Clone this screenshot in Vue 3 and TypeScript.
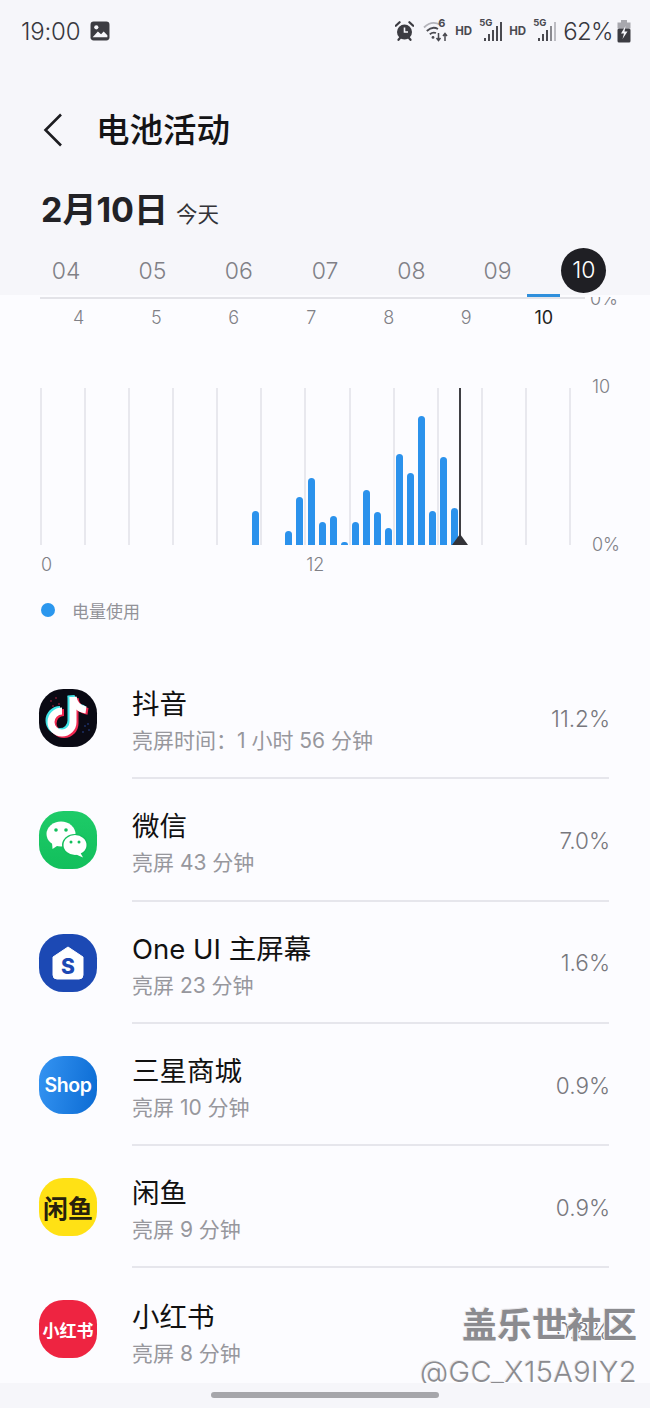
<script setup lang="ts">
interface AppRow {
  key: string
  name: string
  sub: string
  pct: string
}

const days = ['04', '05', '06', '07', '08', '09', '10']
const ticks = [4, 5, 6, 7, 8, 9, 10]
const gridLines = Array.from({ length: 13 }, (_, i) => i)

// bar heights in px, keyed by 15 minute-ish slot (48 slots across the chart)
const barHeights: Record<number, number> = {
  19: 34, 22: 14, 23: 48, 24: 67, 25: 23, 26: 29, 27: 3, 28: 23, 29: 55,
  30: 33, 31: 17, 32: 91, 33: 72, 34: 129, 35: 34, 36: 88, 37: 37,
}
const slots = Array.from({ length: 48 }, (_, i) => barHeights[i] ?? 0)

const apps: AppRow[] = [
  { key: 'douyin', name: '抖音', sub: '亮屏时间：1 小时 56 分钟', pct: '11.2%' },
  { key: 'wechat', name: '微信', sub: '亮屏 43 分钟', pct: '7.0%' },
  { key: 'oneui', name: 'One UI 主屏幕', sub: '亮屏 23 分钟', pct: '1.6%' },
  { key: 'shop', name: '三星商城', sub: '亮屏 10 分钟', pct: '0.9%' },
  { key: 'xianyu', name: '闲鱼', sub: '亮屏 9 分钟', pct: '0.9%' },
  { key: 'xhs', name: '小红书', sub: '亮屏 8 分钟', pct: '0.8%' },
]
</script>

<template>
  <div class="page">
    <header class="head">
      <div class="status">
        <span class="time">19:00</span>
        <svg class="pic" width="20" height="20" viewBox="0 0 19 19">
          <rect x="0.5" y="0.5" width="18" height="18" rx="3" fill="#3c3c42" />
          <circle cx="6" cy="6" r="2" fill="#f6f6fa" />
          <path d="M2.5 15.5 L7.5 10 L10.5 12.5 L13 10 L16.5 13.5 V15.5 Z" fill="#f6f6fa" />
        </svg>
        <div class="status-right">
          <svg class="alarm" width="19" height="20" viewBox="0 0 19 20">
            <circle cx="9.5" cy="11" r="7.5" fill="#3c3c42" />
            <path d="M9.5 6.5 V11 H13" fill="none" stroke="#f6f6fa" stroke-width="1.6" />
            <path d="M0.8 4.8 L4.6 1.2 M18.2 4.8 L14.4 1.2 M3.5 18.8 L5 17 M15.5 18.8 L14 17" stroke="#3c3c42" stroke-width="2.2" stroke-linecap="round" />
          </svg>
          <div class="wifi">
            <svg width="27" height="24" viewBox="0 0 27 24">
              <path d="M1 8.5 C6 3.5 12 3 17 5.5" fill="none" stroke="#b4b4ba" stroke-width="1.8" />
              <path d="M3.8 12 C7.5 8.5 11.5 8 15 10" fill="none" stroke="#4a4a50" stroke-width="1.8" />
              <path d="M6.8 15.2 C9 13.4 11 13.2 13 14" fill="none" stroke="#4a4a50" stroke-width="1.8" />
              <circle cx="10" cy="18.4" r="1.4" fill="#4a4a50" />
              <path d="M15.5 14 V21 M13.5 19 L15.5 21.5 L17.5 19 M22 22 V15 M20 17 L22 14.5 L24 17" fill="none" stroke="#4a4a50" stroke-width="1.5" />
            </svg>
            <span class="wifi-six">6</span>
          </div>
          <span class="hd">HD</span>
          <div class="net">
            <span class="five-g">5G</span>
            <svg width="23" height="22" viewBox="0 0 23 22">
              <rect x="5" y="18" width="2" height="3" fill="#4a4a50" />
              <rect x="9" y="14" width="2" height="7" fill="#4a4a50" />
              <rect x="13" y="10" width="2" height="11" fill="#4a4a50" />
              <rect x="17" y="6" width="2" height="15" fill="#4a4a50" />
              <rect x="21" y="2" width="2" height="19" fill="#4a4a50" />
            </svg>
          </div>
          <span class="hd">HD</span>
          <div class="net">
            <span class="five-g">5G</span>
            <svg width="23" height="22" viewBox="0 0 23 22">
              <rect x="5" y="18" width="2" height="3" fill="#4a4a50" />
              <rect x="9" y="14" width="2" height="7" fill="#4a4a50" />
              <rect x="13" y="10" width="2" height="11" fill="#4a4a50" />
              <rect x="17" y="6" width="2" height="15" fill="#8a8a90" />
              <rect x="21" y="2" width="2" height="19" fill="#bcbcc2" />
            </svg>
          </div>
          <span class="batt-num">62%</span>
          <svg class="batt" width="14" height="23" viewBox="0 0 14 23">
            <rect x="4" y="0" width="6" height="3" fill="#a8a8ae" />
            <rect x="0.5" y="2.5" width="13" height="6" fill="#a8a8ae" />
            <rect x="0.5" y="8.5" width="13" height="14" rx="1.5" fill="#3c3c42" />
            <path d="M8.5 6 L4 13.5 H7 L5.5 19 L10.5 11.5 H7.5 Z" fill="#f6f6fa" />
          </svg>
        </div>
      </div>

      <div class="title-row">
        <svg class="back" width="20" height="34" viewBox="0 0 20 34">
          <path d="M18 1.5 L2.5 17 L18 32.5" fill="none" stroke="#1c1c20" stroke-width="2.6" />
        </svg>
        <h1 class="title">电池活动</h1>
      </div>

      <div class="date-row">
        <span class="date">2月10日</span>
        <span class="today">今天</span>
      </div>

      <div class="week">
        <div v-for="d in days" :key="d" class="day" :class="{ on: d === '10' }">
          <span>{{ d }}</span>
        </div>
      </div>
    </header>

    <section class="panel">
      <span class="clipped-pct">0%</span>
      <div class="axis"><i class="axis-on"></i></div>
      <div class="ticks">
        <span v-for="t in ticks" :key="t" class="tick" :class="{ on: t === 10 }">{{ t }}</span>
      </div>

      <div class="chart-wrap">
        <div class="chart">
          <div class="lines">
            <i v-for="n in gridLines" :key="n" class="line"></i>
          </div>
          <div class="bars">
            <div v-for="(h, i) in slots" :key="i" class="slot">
              <i v-if="h" class="bar" :style="{ height: h + 'px' }"></i>
            </div>
          </div>
          <div class="now"></div>
        </div>
        <div class="y-labels">
          <span>10</span>
          <span>0%</span>
        </div>
      </div>

      <div class="x-labels">
        <span class="x-0">0</span>
        <span class="x-12">12</span>
      </div>

      <div class="legend">
        <i class="dot"></i>
        <span>电量使用</span>
      </div>

      <ul class="list">
        <li v-for="a in apps" :key="a.key" class="row">
          <div class="icon" :class="a.key">
            <svg v-if="a.key === 'douyin'" width="58" height="58" viewBox="0 0 58 58">
              <g fill="#7a1830">
                <circle cx="12" cy="12" r="1" /><circle cx="17" cy="9" r="1" /><circle cx="14" cy="17" r="1" /><circle cx="20" cy="15" r="1" />
              </g>
              <g fill="#1c2f66">
                <circle cx="46" cy="37" r="1" /><circle cx="50" cy="41" r="1" /><circle cx="44" cy="43" r="1" /><circle cx="49" cy="35" r="1" />
              </g>
              <g fill="none" stroke-width="7">
                <g stroke="#3fe3e6" transform="translate(-2 -1.4)">
                  <path d="M34 8 V33 A11 11 0 1 1 23 22" />
                  <path d="M34 8 C35 15 40 20 47 21" />
                </g>
                <g stroke="#f02a52" transform="translate(2 1.4)">
                  <path d="M34 8 V33 A11 11 0 1 1 23 22" />
                  <path d="M34 8 C35 15 40 20 47 21" />
                </g>
                <g stroke="#fff">
                  <path d="M34 8 V33 A11 11 0 1 1 23 22" />
                  <path d="M34 8 C35 15 40 20 47 21" />
                </g>
              </g>
            </svg>

            <svg v-else-if="a.key === 'wechat'" width="58" height="58" viewBox="0 0 58 58">
              <ellipse cx="22" cy="23" rx="14.5" ry="12.5" fill="#fff" />
              <path d="M13 31 L13.5 38 L21 33 Z" fill="#fff" />
              <ellipse cx="36" cy="34" rx="13" ry="11" fill="#12bf5c" />
              <ellipse cx="36" cy="34" rx="11.5" ry="10" fill="#fff" />
              <path d="M41 41 L44 46.5 L36 43 Z" fill="#fff" />
              <circle cx="17" cy="19" r="1.8" fill="#12bf5c" />
              <circle cx="27" cy="19" r="1.8" fill="#12bf5c" />
              <circle cx="32" cy="31" r="1.5" fill="#12bf5c" />
              <circle cx="40" cy="31" r="1.5" fill="#12bf5c" />
            </svg>

            <template v-else-if="a.key === 'oneui'">
              <svg class="house" width="32" height="34" viewBox="0 0 32 34">
                <path d="M16 1 L31 11 V29 Q31 33 27 33 H5 Q1 33 1 29 V11 Z" fill="#fff" stroke="#fff" stroke-linejoin="round" />
              </svg>
              <span class="house-s">S</span>
            </template>

            <span v-else-if="a.key === 'shop'">Shop</span>
            <span v-else-if="a.key === 'xianyu'">闲鱼</span>
            <span v-else>小红书</span>
          </div>

          <div class="info">
            <div class="texts">
              <div class="name">{{ a.name }}</div>
              <div class="sub">{{ a.sub }}</div>
            </div>
            <div class="pct">{{ a.pct }}</div>
          </div>
        </li>
      </ul>
    </section>

    <div class="watermark">
      <div class="wm-top">盖乐世社区</div>
      <div class="wm-bot">@GC_X15A9IY2</div>
    </div>

    <footer class="nav"><i class="pill"></i></footer>
  </div>
</template>

<style scoped>
.page {
  position: relative;
  width: 650px;
  height: 1408px;
  overflow: hidden;
  background: #fcfcff;
  font-family: Inter, "Noto Sans CJK SC", sans-serif;
  color: #111;
}
.head {
  height: 295px;
  background: #f6f6fa;
  overflow: hidden;
}
.status {
  display: flex;
  align-items: center;
  height: 24px;
  padding: 19px 19px 0 21px;
}
.time {
  font-size: 24px;
  font-weight: 300;
  color: #38383e;
  letter-spacing: -0.2px;
}
.pic {
  margin-left: 10px;
}
.status-right {
  margin-left: auto;
  display: flex;
  align-items: center;
}
.alarm {
  margin-right: 9px;
}
.wifi {
  position: relative;
  width: 27px;
  height: 24px;
  margin-right: 5px;
}
.wifi-six {
  position: absolute;
  left: 15px;
  top: -3px;
  font-size: 11px;
  font-weight: 700;
  color: #4a4a50;
}
.hd {
  font-size: 11.5px;
  font-weight: 700;
  color: #4a4a50;
  width: 17px;
  margin-right: 7px;
}
.net {
  position: relative;
  width: 23px;
  height: 22px;
  margin-right: 7px;
}
.five-g {
  position: absolute;
  left: 0;
  top: -3px;
  font-size: 9.5px;
  font-weight: 700;
  color: #4a4a50;
}
.batt-num {
  font-size: 24px;
  font-weight: 300;
  letter-spacing: -0.6px;
  color: #38383e;
  margin-right: 4px;
}
.title-row {
  display: flex;
  align-items: center;
  height: 50px;
  margin-top: 62px;
  padding-left: 43px;
}
.title {
  margin: 0 0 0 33px;
  font-size: 33.5px;
  font-weight: 500;
  line-height: 50px;
  color: #141416;
}
.date-row {
  display: flex;
  align-items: baseline;
  height: 48px;
  margin-top: 31px;
  padding-left: 41px;
}
.date {
  font-size: 34px;
  font-weight: 700;
  color: #222226;
  line-height: 48px;
}
.today {
  margin-left: 8px;
  font-size: 21.5px;
  color: #333338;
}
.week {
  display: flex;
  margin-top: 13px;
  padding-left: 23px;
}
.day {
  width: 86.3px;
  height: 46px;
  display: flex;
  align-items: center;
  justify-content: center;
  font-size: 23px;
  font-weight: 300;
  color: #808086;
}
.day span {
  padding-top: 2px;
}
.day.on span {
  width: 45px;
  height: 45px;
  padding-top: 0;
  border-radius: 50%;
  background: #1f1f24;
  color: #fff;
  display: flex;
  align-items: center;
  justify-content: center;
}
.panel {
  position: relative;
}
/* the 0% of the chart scrolled under the sticky header, only its foot shows */
.clipped-pct {
  position: absolute;
  left: 590px;
  top: 0;
  height: 8px;
  line-height: 3px;
  overflow: hidden;
  font-size: 18px;
  font-weight: 300;
  color: #808086;
}
.axis {
  position: relative;
  width: 545px;
  height: 2px;
  margin: 2px 0 0 40px;
  background: #e3e3e8;
}
.axis-on {
  position: absolute;
  left: 487px;
  top: -3px;
  width: 33px;
  height: 3px;
  background: #2f8fdc;
}
.ticks {
  display: flex;
  padding: 7px 0 0 40px;
}
.tick {
  width: 77.5px;
  text-align: center;
  font-size: 18px;
  line-height: 24px;
  font-weight: 300;
  color: #808086;
}
.tick.on {
  color: #222;
  font-weight: 400;
}
.chart-wrap {
  display: flex;
  margin: 58px 0 0 40px;
}
.chart {
  position: relative;
  width: 531px;
  height: 157px;
}
.lines {
  display: flex;
  justify-content: space-between;
  height: 100%;
}
.line {
  width: 2px;
  background: #e8e8ee;
}
.bars {
  position: absolute;
  left: 0;
  right: 0;
  bottom: 0;
  height: 100%;
  display: flex;
  align-items: flex-end;
}
.slot {
  flex: 1;
  display: flex;
  justify-content: center;
  align-items: flex-end;
  height: 100%;
}
.bar {
  width: 7px;
  background: #2b92ec;
  border-radius: 3.5px 3.5px 0 0;
}
.now {
  position: absolute;
  left: 419px;
  top: 0;
  width: 2px;
  height: 157px;
  background: #3f3f44;
}
.now::after {
  content: "";
  position: absolute;
  left: -7px;
  bottom: 0;
  border-left: 8px solid transparent;
  border-right: 8px solid transparent;
  border-bottom: 11px solid #333338;
}
.y-labels {
  display: flex;
  flex-direction: column;
  justify-content: space-between;
  height: 182px;
  margin: -13px 0 0 21px;
  font-size: 18px;
  font-weight: 300;
  line-height: 24px;
  color: #808086;
}
.x-labels {
  display: flex;
  margin-top: -4px;
  padding-left: 41px;
  font-size: 18px;
  font-weight: 300;
  line-height: 24px;
  color: #808086;
}
.x-12 {
  margin-left: 254px;
}
.legend {
  display: flex;
  align-items: center;
  margin-top: 21px;
  padding-left: 41px;
  height: 24px;
  font-size: 17px;
  color: #929298;
}
.dot {
  width: 14px;
  height: 14px;
  border-radius: 50%;
  background: #2b97ee;
  margin-right: 17px;
}
.list {
  list-style: none;
  margin: 35px 0 0;
  padding: 0 41px 0 39px;
}
.row {
  display: flex;
  align-items: flex-start;
  height: 122.3px;
  box-sizing: border-box;
}
.icon {
  flex: none;
  width: 58px;
  height: 58px;
  margin-top: 32px;
  border-radius: 42%;
  position: relative;
  display: flex;
  align-items: center;
  justify-content: center;
  overflow: hidden;
  white-space: nowrap;
}
.icon.douyin {
  background: #0a0a14;
}
.icon.wechat {
  background: linear-gradient(#1ecb68, #12bf5c);
}
.icon.oneui {
  background: #1c49b4;
}
.house {
  position: absolute;
  left: 13px;
  top: 12px;
}
.house-s {
  position: relative;
  top: 4px;
  font-size: 21px;
  font-weight: 800;
  color: #1c49b4;
}
.icon.shop {
  background: linear-gradient(100deg, #3594f2, #0b6bd3);
  color: #fff;
  font-size: 19.5px;
  font-weight: 600;
  letter-spacing: -0.4px;
}
.icon.xianyu {
  background: #ffe115;
  color: #27210c;
  font-size: 25px;
  font-weight: 700;
}
.icon.xhs {
  background: #ee2441;
  color: #fff;
  font-size: 17px;
  font-weight: 700;
}
.info {
  flex: 1;
  height: 100%;
  box-sizing: border-box;
  margin-left: 35px;
  display: flex;
  align-items: center;
  justify-content: space-between;
  border-bottom: 2px solid #e6e6ec;
}
.row:last-child .info {
  border-bottom: none;
}
.texts {
  padding-top: 8px;
}
.name {
  margin-bottom: 2px;
  font-size: 27.5px;
  line-height: 38px;
  color: #111;
}
.sub {
  font-size: 21px;
  line-height: 32px;
  color: #97979d;
}
.pct {
  padding-top: 2px;
  margin-right: -1px;
  font-size: 22.5px;
  font-weight: 300;
  color: #77777d;
}
.watermark {
  position: absolute;
  right: 13px;
  top: 1301px;
  text-align: right;
  color: #8b8b8f;
  text-shadow: 1px 1px 0 #fff, -1px -1px 0 #e8e8ec;
}
.wm-top {
  font-size: 35px;
  font-weight: 700;
  line-height: 44px;
  font-family: "Noto Sans CJK SC", sans-serif;
}
.wm-bot {
  margin-top: 4px;
  font-size: 29px;
  font-weight: 300;
  letter-spacing: 0.4px;
  line-height: 46px;
}
.nav {
  position: absolute;
  left: 0;
  right: 0;
  bottom: 0;
  height: 25px;
  background: #f6f6fa;
  display: flex;
  justify-content: center;
}
.pill {
  width: 228px;
  height: 6px;
  margin-top: 9px;
  border-radius: 3px;
  background: #a6a6aa;
}
</style>
